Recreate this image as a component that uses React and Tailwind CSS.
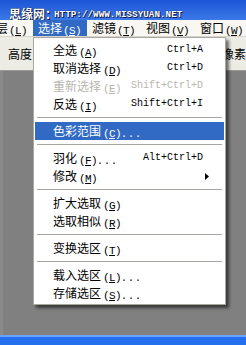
import React from "react";

const cjk = "font-['SimSun','Noto_Sans_CJK_SC',sans-serif]";
const mono = "font-['Liberation_Mono',monospace]";

function Mn({ k }) {
  return (
    <span className={`${mono} text-[11px] tracking-[-0.6px]`}>
      (<span className="underline underline-offset-1">{k}</span>)
    </span>
  );
}

const groups = [
  [
    { t: "全选", k: "A", s: "Ctrl+A" },
    { t: "取消选择", k: "D", s: "Ctrl+D" },
    { t: "重新选择", k: "E", s: "Shift+Ctrl+D", off: true },
    { t: "反选", k: "I", s: "Shift+Ctrl+I" },
  ],
  [{ t: "色彩范围", k: "C", dots: true, hi: true }],
  [
    { t: "羽化", k: "F", dots: true, s: "Alt+Ctrl+D" },
    { t: "修改", k: "M", sub: true },
  ],
  [
    { t: "扩大选取", k: "G" },
    { t: "选取相似", k: "R" },
  ],
  [{ t: "变换选区", k: "T" }],
  [
    { t: "载入选区", k: "L", dots: true },
    { t: "存储选区", k: "S", dots: true },
  ],
];

function Item({ it }) {
  const color = it.hi ? "bg-[#316ac5] text-white" : it.off ? "text-[#b8b6ae]" : "text-black";
  return (
    <div className={`h-[18px] mx-[1px] flex items-center pl-[18px] pr-[21px] ${color}`}>
      <span className={`${cjk} text-[12px] leading-none`}>{it.t}</span>
      <span className="ml-[2px] leading-none">
        <Mn k={it.k} />
        {it.dots && <span className={`${mono} text-[10px] tracking-[1px]`}>...</span>}
      </span>
      <span className="flex-1" />
      {it.s && <span className={`${mono} text-[10px] leading-none`}>{it.s}</span>}
      {it.sub && (
        <svg width="4" height="7" viewBox="0 0 4 7" className="mr-[-6px]">
          <path d="M0 0 L4 3.5 L0 7 Z" fill="#000" />
        </svg>
      )}
    </div>
  );
}

function Sep() {
  return (
    <div className="h-[9px] flex flex-col justify-center px-[3px]">
      <div className="h-[1px] bg-[#a7a6a0]" />
      <div className="h-[1px] bg-white" />
    </div>
  );
}

export default function App() {
  const menu = ["滤镜|T", "视图|V", "窗口|W"];
  return (
    <div className="relative w-[246px] h-[345px] overflow-hidden bg-[#808080] flex flex-col">
      {/* title bar */}
      <div className="h-[20px] bg-gradient-to-b from-[#1d55d6] to-[#3b78e8] flex items-end pl-[9px] gap-[1px]">
        <span className={`${cjk} text-[12px] font-bold leading-[12px] text-white [text-shadow:0_0_1px_#000,1px_1px_0_#102060]`}>
          思缘网：
        </span>
        <span className={`${mono} text-[9.3px] font-bold leading-[9px] mb-[1px] -ml-[4px] text-white [text-shadow:0_0_1px_#000,1px_1px_0_#102060]`}>
          HTTP://WWW.MISSYUAN.NET
        </span>
      </div>

      {/* menu bar */}
      <div className="h-[17px] bg-[#f8f7f2] flex items-center text-black border-b border-[#d8d6cc]">
        <div className="w-[33px] h-full flex items-center shrink-0">
          <span className={`${cjk} text-[12px] leading-none -ml-[4px]`}>层</span>
          <span className="ml-[1px]"><Mn k="L" /></span>
        </div>
        <div className="w-[54px] h-full flex items-center pl-[5px] bg-[#316ac5] text-white shrink-0">
          <span className={`${cjk} text-[12px] leading-none`}>选择</span>
          <span className="ml-[1px]"><Mn k="S" /></span>
        </div>
        {menu.map((m) => {
          const [t, k] = m.split("|");
          return (
            <div key={t} className="w-[54px] h-full flex items-center pl-[5px] shrink-0">
              <span className={`${cjk} text-[12px] leading-none`}>{t}</span>
              <span className="ml-[1px]"><Mn k={k} /></span>
            </div>
          );
        })}
      </div>

      {/* options bar */}
      <div className="h-[34px] bg-[#ecebe4] flex items-center justify-between pl-[8px] border-b border-[#9c9a92]">
        <span className={`${cjk} text-[12px] leading-none text-black`}>高度</span>
        <span className={`${cjk} text-[12px] leading-none text-black`}>像素</span>
      </div>

      {/* workspace */}
      <div className="flex-1 border-l-[3px] border-[#8a8a8a]" />

      {/* task bar */}
      <div className="h-[10px] bg-[#2470ee] border-t-2 border-[#6aa4fa]" />

      {/* dropdown menu */}
      <div className="absolute left-[33px] top-[37px] w-[193px] bg-white border border-[#a9a79f] pt-[3px] pb-[2px] shadow-[3px_3px_3px_rgba(0,0,0,0.55)]">
        {groups.map((g, i) => (
          <div key={i}>
            {i > 0 && <Sep />}
            {g.map((it) => (
              <Item key={it.t} it={it} />
            ))}
          </div>
        ))}
      </div>
    </div>
  );
}
